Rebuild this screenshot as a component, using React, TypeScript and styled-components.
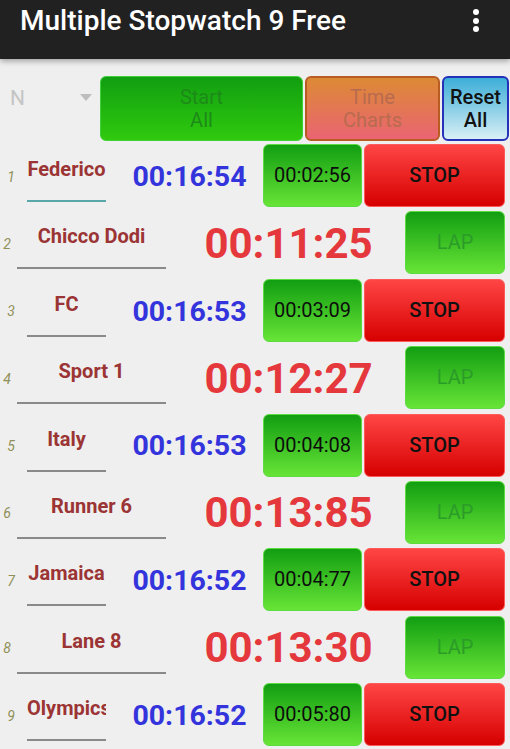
import React from "react";
import styled, { createGlobalStyle, css } from "styled-components";

const GlobalStyle = createGlobalStyle`
  html, body { margin: 0; padding: 0; background: #efefef; }
  body { font-family: Roboto, "Noto Sans", "Liberation Sans", sans-serif; }
  * { box-sizing: border-box; }
`;

const Screen = styled.div`
  width: 510px;
  height: 749px;
  overflow: hidden;
  background: #efefef;
  display: flex;
  flex-direction: column;
`;

const AppBar = styled.header`
  height: 59px;
  flex: none;
  background: #212121;
  display: flex;
  align-items: flex-start;
  justify-content: space-between;
  padding: 4px 28px 0 20px;
  position: relative;
  box-shadow: 0 2px 6px rgba(0, 0, 0, 0.35);
  z-index: 1;
`;

const Title = styled.h1`
  margin: 0;
  color: #ffffff;
  font-size: 28px;
  font-weight: 500;
  line-height: 34px;
  letter-spacing: 0;
`;

const Kebab = styled.div`
  width: 12px;
  display: flex;
  flex-direction: column;
  align-items: center;
  gap: 2.5px;
  padding-top: 5px;
  span {
    width: 6px;
    height: 6px;
    border-radius: 50%;
    background: #ffffff;
  }
`;

const Content = styled.main`
  display: flex;
  flex-direction: column;
  padding-top: 17px;
`;

const HeaderRow = styled.div`
  display: flex;
  height: 65px;
  align-items: stretch;
`;

const Spinner = styled.div`
  width: 100px;
  display: flex;
  align-items: flex-start;
  padding: 10px 8px 0 10px;
  justify-content: space-between;
`;

const SpinnerText = styled.span`
  color: #c4c4c4;
  font-size: 21px;
  line-height: 24px;
`;

const SpinnerArrow = styled.span`
  width: 0;
  height: 0;
  margin-top: 8px;
  border-left: 6px solid transparent;
  border-right: 6px solid transparent;
  border-top: 7px solid #bdbdbd;
`;

type Tone = "green" | "orange" | "blue" | "red";

const toneStyles: Record<Tone, ReturnType<typeof css>> = {
  green: css`
    background: linear-gradient(#129e12, #67e436);
    border: 1.5px solid #5cdc40;
  `,
  orange: css`
    background: linear-gradient(#dc8a35, #ea6472);
    border: 2px solid #b95c22;
  `,
  blue: css`
    background: linear-gradient(#3caed8, #d8eff5);
    border: 2px solid #2431b8;
  `,
  red: css`
    background: linear-gradient(#ff4545, #d60000);
    border: 1.5px solid #ff5a5a;
  `,
};

const Btn = styled.div<{ $tone: Tone; $w: number; $ml?: number }>`
  width: ${(p) => p.$w}px;
  margin-left: ${(p) => p.$ml ?? 0}px;
  flex: none;
  border-radius: 6px;
  display: flex;
  align-items: center;
  justify-content: center;
  text-align: center;
  ${(p) => toneStyles[p.$tone]}
`;

const StartBtn = styled(Btn)`
  background: linear-gradient(#119e11, #30ca0e);
  border: 1.5px solid #3fd03a;
`;

const BtnLabel = styled.span<{ $color: string; $size?: number; $weight?: number }>`
  color: ${(p) => p.$color};
  font-size: ${(p) => p.$size ?? 20}px;
  font-weight: ${(p) => p.$weight ?? 400};
  line-height: 23px;
  white-space: pre-line;
`;

const Rows = styled.div`
  display: flex;
  flex-direction: column;
  gap: 4.375px;
  margin-top: 3px;
`;

const Row = styled.div`
  display: flex;
  height: 63px;
  align-items: stretch;
  flex: none;
`;

const Num = styled.div<{ $w: number; $mr: number }>`
  width: ${(p) => p.$w}px;
  margin-right: ${(p) => p.$mr}px;
  display: flex;
  align-items: center;
  justify-content: flex-end;
  padding-top: 2px;
  color: #8f8f58;
  font-style: italic;
  font-size: 14px;
  flex: none;
`;

const NameField = styled.div<{ $w: number; $focused?: boolean }>`
  width: ${(p) => p.$w}px;
  flex: none;
  display: flex;
  flex-direction: column;
  padding-top: 14px;
  overflow: hidden;
  &::after {
    content: "";
    display: block;
    margin-top: 19px;
    height: 2px;
    background: ${(p) => (p.$focused ? "#5aa7aa" : "#8a8a8a")};
  }
`;

const NameText = styled.div`
  display: flex;
  justify-content: safe center;
  white-space: nowrap;
  overflow: hidden;
  color: #9b3434;
  font-weight: 700;
  font-size: 20px;
  line-height: 23px;
`;

const TimeCell = styled.div<{ $w: number; $pl: number }>`
  width: ${(p) => p.$w}px;
  padding-left: ${(p) => p.$pl}px;
  flex: none;
  display: flex;
  align-items: center;
  justify-content: center;
`;

const RunTime = styled.span`
  color: #3434dc;
  font-weight: 700;
  font-size: 28.5px;
  line-height: 1;
  padding-top: 3px;
`;

const StopTime = styled.span`
  color: #e5383c;
  font-weight: 700;
  font-size: 42px;
  line-height: 1;
  padding-top: 2px;
`;

type Runner = { name: string; running: boolean; time: string; lap?: string; focused?: boolean };

const runners: Runner[] = [
  { name: "Federico", running: true, time: "00:16:54", lap: "00:02:56", focused: true },
  { name: "Chicco Dodi", running: false, time: "00:11:25" },
  { name: "FC", running: true, time: "00:16:53", lap: "00:03:09" },
  { name: "Sport 1", running: false, time: "00:12:27" },
  { name: "Italy", running: true, time: "00:16:53", lap: "00:04:08" },
  { name: "Runner 6", running: false, time: "00:13:85" },
  { name: "Jamaica", running: true, time: "00:16:52", lap: "00:04:77" },
  { name: "Lane 8", running: false, time: "00:13:30" },
  { name: "Olympics", running: true, time: "00:16:52", lap: "00:05:80" },
];

const Kebabs = () => (
  <Kebab>
    <span />
    <span />
    <span />
  </Kebab>
);

export default function App() {
  return (
    <>
      <GlobalStyle />
      <Screen>
        <AppBar>
          <Title>Multiple Stopwatch 9 Free</Title>
          <Kebabs />
        </AppBar>
        <Content>
          <HeaderRow>
            <Spinner>
              <SpinnerText>N</SpinnerText>
              <SpinnerArrow />
            </Spinner>
            <StartBtn $tone="green" $w={203}>
              <BtnLabel $color="#1c8a18">{"Start\nAll"}</BtnLabel>
            </StartBtn>
            <Btn $tone="orange" $w={135} $ml={2}>
              <BtnLabel $color="#b86b4e">{"Time\nCharts"}</BtnLabel>
            </Btn>
            <Btn $tone="blue" $w={67} $ml={2}>
              <BtnLabel $color="#111111" $weight={500}>{"Reset\nAll"}</BtnLabel>
            </Btn>
          </HeaderRow>
          <Rows>
            {runners.map((r, i) =>
              r.running ? (
                <Row key={i}>
                  <Num $w={15} $mr={12}>{i + 1}</Num>
                  <NameField $w={79} $focused={r.focused}>
                    <NameText>{r.name}</NameText>
                  </NameField>
                  <TimeCell $w={157} $pl={10}>
                    <RunTime>{r.time}</RunTime>
                  </TimeCell>
                  <Btn $tone="green" $w={99}>
                    <BtnLabel $color="#0d0d0d">{r.lap}</BtnLabel>
                  </Btn>
                  <Btn $tone="red" $w={141} $ml={2}>
                    <BtnLabel $color="#111111" $weight={500}>STOP</BtnLabel>
                  </Btn>
                </Row>
              ) : (
                <Row key={i}>
                  <Num $w={11} $mr={6}>{i + 1}</Num>
                  <NameField $w={149}>
                    <NameText>{r.name}</NameText>
                  </NameField>
                  <TimeCell $w={239} $pl={6}>
                    <StopTime>{r.time}</StopTime>
                  </TimeCell>
                  <Btn $tone="green" $w={100}>
                    <BtnLabel $color="#2b9c28">LAP</BtnLabel>
                  </Btn>
                </Row>
              )
            )}
          </Rows>
        </Content>
      </Screen>
    </>
  );
}
